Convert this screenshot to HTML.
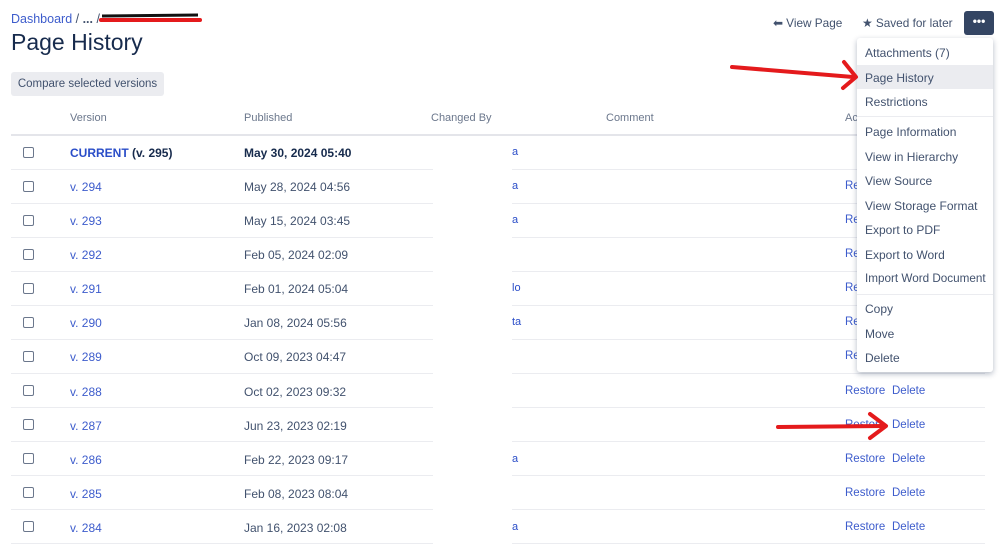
<!DOCTYPE html>
<html><head><style>
body{margin:0;width:999px;height:554px;overflow:hidden;background:#fff;font-family:"Liberation Sans",sans-serif;color:#172b4d;position:relative}
.a{position:absolute;white-space:nowrap}
.bc{left:11px;top:12px;font-size:12.5px;color:#42526e}
.bc span{color:#3d5ccc}
h1{position:absolute;left:11px;top:29px;margin:0;font-size:23px;font-weight:normal;color:#172b4d}
.btn{left:11px;top:72px;width:153px;height:24px;background:#ebecf0;border-radius:3px;font-size:11.5px;color:#42526e;line-height:24px;text-align:center}
.th{top:112px;font-size:11px;color:#6b778c}
.hl{position:absolute;left:11px;width:974px;top:134px;height:2px;background:#e4e5ea}
.rl{position:absolute;left:11px;width:974px;height:1px;background:#ebecf0}
.cb{position:absolute;left:23px;width:9px;height:9px;border:1px solid #6b778c;border-radius:2px;background:#fff}
.v{left:70px;font-size:12px;color:#3d5ccc}
.d{left:244px;font-size:12px;color:#42526e}
.r{left:845px;font-size:11.5px;color:#3d5ccc}
.x{left:892px;font-size:11.5px;color:#3d5ccc}
.menu{position:absolute;left:857px;top:38px;width:136px;height:334px;background:#fff;border-radius:3px;box-shadow:0 2px 6px rgba(9,30,66,.3)}
.mi{position:absolute;left:8px;font-size:12px;color:#42526e}
.sep{position:absolute;left:0;width:136px;height:1px;background:#ebecf0}
.nm{position:absolute;left:512px;font-size:11px;color:#2a4dc8}
</style></head><body>
<div class="a bc"><span>Dashboard</span> / <b>...</b> /</div>
<svg class="a" style="left:98px;top:12px" width="106" height="12"><path d="M4 4 L100 3" stroke="#111" stroke-width="3"/><path d="M3 8 L102 8" stroke="#e41a1c" stroke-width="4" stroke-linecap="round"/></svg>
<h1>Page History</h1>
<div class="a btn">Compare selected versions</div>
<div class="a" style="left:773px;top:16px;font-size:11.8px;color:#42526e">&#x2B05; View Page</div>
<div class="a" style="left:862px;top:16px;font-size:11.8px;color:#42526e">★ Saved for later</div>
<div class="a" style="left:964px;top:11px;width:30px;height:24px;background:#344563;border-radius:3px;color:#fff;text-align:center;font-weight:bold;font-size:12px;line-height:20px">•••</div>
<div class="a th" style="left:70px">Version</div>
<div class="a th" style="left:244px">Published</div>
<div class="a th" style="left:431px">Changed By</div>
<div class="a th" style="left:606px">Comment</div>
<div class="a th" style="left:845px">Ac</div>
<div class="hl"></div>

<div class="cb" style="top:147px"></div>
<div class="a v" style="top:146px;font-weight:bold;color:#172b4d"><span style="color:#2a4dc8">CURRENT</span> (v. 295)</div>
<div class="a d" style="top:146px;font-weight:bold;color:#172b4d">May 30, 2024 05:40</div>
<div class="rl" style="top:169px"></div>

<div class="cb" style="top:181px"></div><div class="a v" style="top:180px">v. 294</div><div class="a d" style="top:180px">May 28, 2024 04:56</div><div class="a r" style="top:180px">Re</div><div class="rl" style="top:203px"></div>
<div class="cb" style="top:215px"></div><div class="a v" style="top:214px">v. 293</div><div class="a d" style="top:214px">May 15, 2024 03:45</div><div class="a r" style="top:214px">Re</div><div class="rl" style="top:237px"></div>
<div class="cb" style="top:249px"></div><div class="a v" style="top:248px">v. 292</div><div class="a d" style="top:248px">Feb 05, 2024 02:09</div><div class="a r" style="top:248px">Re</div><div class="rl" style="top:271px"></div>
<div class="cb" style="top:283px"></div><div class="a v" style="top:282px">v. 291</div><div class="a d" style="top:282px">Feb 01, 2024 05:04</div><div class="a r" style="top:282px">Re</div><div class="rl" style="top:305px"></div>
<div class="cb" style="top:317px"></div><div class="a v" style="top:316px">v. 290</div><div class="a d" style="top:316px">Jan 08, 2024 05:56</div><div class="a r" style="top:316px">Re</div><div class="rl" style="top:339px"></div>
<div class="cb" style="top:351px"></div><div class="a v" style="top:350px">v. 289</div><div class="a d" style="top:350px">Oct 09, 2023 04:47</div><div class="a r" style="top:350px">Re</div><div class="rl" style="top:373px"></div>
<div class="cb" style="top:385px"></div><div class="a v" style="top:385px">v. 288</div><div class="a d" style="top:385px">Oct 02, 2023 09:32</div><div class="a r" style="top:385px">Restore</div><div class="a x" style="top:385px">Delete</div><div class="rl" style="top:407px"></div>
<div class="cb" style="top:419px"></div><div class="a v" style="top:419px">v. 287</div><div class="a d" style="top:419px">Jun 23, 2023 02:19</div><div class="a r" style="top:419px">Restore</div><div class="a x" style="top:419px">Delete</div><div class="rl" style="top:441px"></div>
<div class="cb" style="top:453px"></div><div class="a v" style="top:453px">v. 286</div><div class="a d" style="top:453px">Feb 22, 2023 09:17</div><div class="a r" style="top:453px">Restore</div><div class="a x" style="top:453px">Delete</div><div class="rl" style="top:475px"></div>
<div class="cb" style="top:487px"></div><div class="a v" style="top:487px">v. 285</div><div class="a d" style="top:487px">Feb 08, 2023 08:04</div><div class="a r" style="top:487px">Restore</div><div class="a x" style="top:487px">Delete</div><div class="rl" style="top:509px"></div>
<div class="cb" style="top:521px"></div><div class="a v" style="top:521px">v. 284</div><div class="a d" style="top:521px">Jan 16, 2023 02:08</div><div class="a r" style="top:521px">Restore</div><div class="a x" style="top:521px">Delete</div><div class="rl" style="top:543px"></div>

<div class="a" style="left:433px;top:140px;width:79px;height:414px;background:#fff"></div>
<div class="nm" style="top:146px">a</div>
<div class="nm" style="top:180px">a</div>
<div class="nm" style="top:214px">a</div>
<div class="nm" style="top:282px">lo</div>
<div class="nm" style="top:316px">ta</div>
<div class="nm" style="top:453px">a</div>
<div class="nm" style="top:521px">a</div>

<div class="menu">
<div class="mi" style="top:8px">Attachments (7)</div>
<div style="position:absolute;left:0;top:27px;width:136px;height:24px;background:#ebecf0"></div>
<div class="mi" style="top:33px">Page History</div>
<div class="mi" style="top:57px">Restrictions</div>
<div class="sep" style="top:78px"></div>
<div class="mi" style="top:87px">Page Information</div>
<div class="mi" style="top:112px">View in Hierarchy</div>
<div class="mi" style="top:136px">View Source</div>
<div class="mi" style="top:161px">View Storage Format</div>
<div class="mi" style="top:185px">Export to PDF</div>
<div class="mi" style="top:210px">Export to Word</div>
<div class="mi" style="top:234px;font-size:11.7px">Import Word Document</div>
<div class="sep" style="top:256px"></div>
<div class="mi" style="top:264px">Copy</div>
<div class="mi" style="top:289px">Move</div>
<div class="mi" style="top:313px">Delete</div>
</div>

<svg class="a" style="left:0;top:0" width="999" height="554">
<g stroke="#e41a1c" stroke-width="4" fill="none" stroke-linecap="round" stroke-linejoin="round">
<path d="M732 67 L853 77"/><path d="M844 62 L856 77 L843 88"/>
<path d="M778 427 L884 426"/><path d="M870 414 L886 426 L870 438"/>
</g></svg>
</body></html>
